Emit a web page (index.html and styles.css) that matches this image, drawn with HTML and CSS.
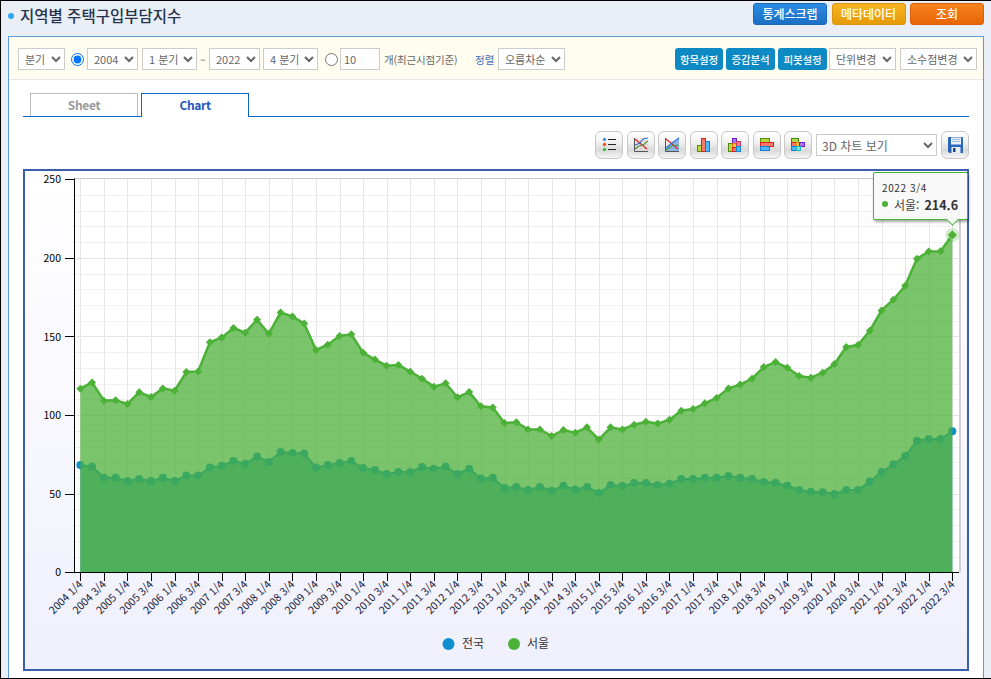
FILE: index.html
```html
<!DOCTYPE html>
<html lang="ko">
<head>
<meta charset="utf-8">
<title>지역별 주택구입부담지수</title>
<link rel="stylesheet" href="styles.css">
</head>
<body>
<header class="top">
  <h1 class="title"><span class="bullet"></span>지역별 주택구입부담지수</h1>
  <div class="top-actions">
    <button class="act act-blue">통계스크랩</button>
    <button class="act act-amber">메타데이터</button>
    <button class="act act-red">조회</button>
  </div>
</header>
<main class="panel">
  <div class="filters">
    <div class="group">
      <select class="sel w47"><option>분기</option></select>
      <input class="radio ml2" type="radio" name="range" checked>
      <select class="sel w51 mln1"><option>2004</option></select>
      <select class="sel w55"><option>1 분기</option></select>
      <span class="tilde">~</span>
      <select class="sel w51"><option>2022</option></select>
      <select class="sel w55 mln1"><option>4 분기</option></select>
      <input class="radio ml3" type="radio" name="range">
      <input class="num" type="text" value="10">
      <span class="hint">개(최근시점기준)</span>
      <span class="sort-label">정렬</span>
      <select class="sel w67"><option>오름차순</option></select>
    </div>
    <div class="group group-right">
      <button class="mini w48">항목설정</button>
      <button class="mini w49">증감분석</button>
      <button class="mini w49">피봇설정</button>
      <select class="sel w67 mln1"><option>단위변경</option></select>
      <select class="sel w77 ml1"><option>소수점변경</option></select>
    </div>
  </div>

  <div class="tabs">
    <div class="tab">Sheet</div>
    <div class="tab tab-on">Chart</div>
  </div>

  <div class="toolbar">
    <div class="tools">
      <button class="tool" title="목록"><svg class="ico" viewBox="0 0 28 28"><circle cx="9.5" cy="8.500" r="1.7" fill="#4a8fd8"/><circle cx="9.5" cy="13.500" r="1.7" fill="#f0521e"/><circle cx="9.5" cy="18.500" r="1.7" fill="#3fbf3f"/><path d="M13 8.500h8M13 13.500h8M13 18.500h8" stroke="#222" fill="none"/></svg></button>
      <button class="tool" title="선형"><svg class="ico" viewBox="0 0 28 28"><path d="M10 7v12M14 7v12M18 7v12M8 10h13M8 14h13" stroke="#d8a8a8" stroke-dasharray="1 1" fill="none"/><path d="M7.500 7v13.500H21" stroke="#555" fill="none"/><path d="M8 8l12 10" stroke="#e8201a" stroke-width="1.200" fill="none"/><path d="M8 14l5-2 3-4 5-1" stroke="#2a6fe0" stroke-width="1.200" fill="none"/><path d="M8 18l4-3 4-1 5-4" stroke="#4a9a3a" stroke-width="1.200" fill="none"/></svg></button>
      <button class="tool" title="영역"><svg class="ico" viewBox="0 0 28 28"><path d="M8 17l6-5 7-5v13H8z" fill="#8fb6e6"/><path d="M7.500 7v13.500H21" stroke="#555" fill="none"/><path d="M8 8l12 10" stroke="#e8201a" stroke-width="1.200" fill="none"/><path d="M8 17l6-5 7-5" stroke="#2a6fe0" stroke-width="1.200" fill="none"/><path d="M8 19l6-4 7-1" stroke="#4a9a3a" stroke-width="1.200" fill="none"/></svg></button>
      <button class="tool" title="막대"><svg class="ico" viewBox="0 0 28 28"><rect x="7.500" y="14.500" width="4" height="6" fill="#b8d840" stroke="#5f8a10"/><rect x="11.500" y="7.500" width="4" height="13" fill="#f47a68" stroke="#e0201a"/><rect x="15.500" y="10.500" width="4" height="10" fill="#50b8f5" stroke="#1a78d0"/></svg></button>
      <button class="tool" title="누적 막대"><svg class="ico" viewBox="0 0 28 28"><rect x="11.500" y="7.500" width="4" height="5" fill="#a878ec" stroke="#6a20c8"/><rect x="7.500" y="12.500" width="4" height="8" fill="#b8d840" stroke="#4f8a10"/><rect x="11.500" y="12.500" width="4" height="4" fill="#f7c830" stroke="#e07a10"/><rect x="11.500" y="16.500" width="4" height="4" fill="#f47a68" stroke="#e0201a"/><rect x="15.500" y="10.500" width="4" height="5" fill="#f47a88" stroke="#c83a6a"/><rect x="15.500" y="15.500" width="4" height="5" fill="#40c0f5" stroke="#1a80d8"/></svg></button>
      <button class="tool" title="가로 막대"><svg class="ico" viewBox="0 0 28 28"><rect x="7.500" y="7.500" width="9" height="4" fill="#b8d840" stroke="#5f8a10"/><rect x="7.500" y="11.500" width="13" height="4" fill="#f47a68" stroke="#e0201a"/><rect x="7.500" y="15.500" width="9" height="4" fill="#50b8f5" stroke="#1a78d0"/></svg></button>
      <button class="tool" title="가로 누적"><svg class="ico" viewBox="0 0 28 28"><rect x="7.500" y="7.500" width="7" height="4" fill="#b8d840" stroke="#3f8a10"/><rect x="7.500" y="11.500" width="5" height="4" fill="#f47a68" stroke="#e0201a"/><rect x="12.500" y="11.500" width="3" height="4" fill="#f7c830" stroke="#e0901a"/><rect x="15.500" y="11.500" width="5" height="4" fill="#a878ec" stroke="#6a20c8"/><rect x="7.500" y="15.500" width="5" height="4" fill="#50b8f5" stroke="#1a78d0"/><rect x="12.500" y="15.500" width="4" height="4" fill="#80e0d8" stroke="#20b8c0"/></svg></button>
    </div>
    <select class="sel sel-3d"><option>3D 차트 보기</option></select>
    <button class="tool" title="저장"><svg class="ico" viewBox="0 0 28 28"><path d="M7 7a1 1 0 0 1 1-1h13a1 1 0 0 1 1 1v15H8.500L7 20.500z" fill="#2a66b8"/><rect x="10" y="6.500" width="10" height="7" fill="#eaf2fb"/><path d="M11 8.500h8M11 10.500h8" stroke="#9dbde0" fill="none"/><rect x="10.500" y="16" width="9" height="6" fill="#e8eef6"/><rect x="12" y="17" width="2.500" height="4" fill="#1d3f80"/></svg></button>
  </div>

  <section class="chart">
    <svg id="plot" class="plot" viewBox="25 171 942 498" width="942" height="498"></svg>
    <div class="tip">
      <div class="tip-date">2022 3/4</div>
      <div class="tip-row"><span class="tip-dot"></span><span class="tip-name">서울:</span><b class="tip-val">214.6</b></div>
      <span class="tip-arrow"></span>
    </div>
  </section>
</main>
<script src="chart.js"></script>
</body>
</html>
```

FILE: styles.css
```css
* { box-sizing: border-box; }
html, body { margin: 0; padding: 0; }
body {
  width: 991px;
  height: 679px;
  overflow: hidden;
  display: flex;
  flex-direction: column;
  background: #eaeff7;
  border-top: 1px solid #000;
  border-left: 1px solid #000;
  border-bottom: 1px solid #000;
  font-family: "Noto Sans CJK KR", "Noto Sans", sans-serif;
  color: #555;
}
button, select, input { font-family: inherit; }

.top {
  height: 35px;
  flex: none;
  display: flex;
  justify-content: space-between;
  align-items: flex-start;
  padding: 2px 7px 0 7px;
}
.title {
  margin: 0;
  display: flex;
  align-items: center;
  font-size: 15.5px;
  font-weight: 500;
  line-height: 24px;
  color: #24344d;
}
.bullet {
  width: 6px;
  height: 6px;
  margin: 2px 6px 0 0;
  border-radius: 50%;
  background: #2ea8f5;
}
.top-actions { display: flex; gap: 4.5px; }
.act {
  width: 74px;
  height: 22px;
  padding: 0;
  border-radius: 3px;
  font-size: 12px;
  font-weight: 500;
  color: #fff;
  line-height: 20px;
}
.act-blue { border: 1px solid #1a68b8; background: linear-gradient(#2c8ce4, #1b6fc6); }
.act-amber { border: 1px solid #dd9410; background: linear-gradient(#f6b424, #e69b08); }
.act-red { border: 1px solid #de5f08; background: linear-gradient(#f6831f, #e96505); }

.panel {
  flex: 1;
  margin: 0 7px;
  min-height: 0;
  background: #fff;
  border: 1px solid #5b9bd5;
  border-bottom: 0;
}
.filters {
  height: 43px;
  display: flex;
  justify-content: space-between;
  padding: 11px 6px 0 9px;
  background: #fffdf0;
  border-bottom: 1px solid #e8e8e8;
}
.group { display: flex; align-items: center; gap: 4px; height: 22px; }
.group-right { gap: 3px; }
.sel {
  height: 22px;
  padding: 0 0 0 2px;
  background: #fff;
  border: 1px solid #ccc;
  border-radius: 0;
  font-size: 11px;
  color: #666;
}
.w47 { width: 47px; }
.w51 { width: 51px; }
.w55 { width: 55px; }
.w67 { width: 67px; }
.w77 { width: 77px; }
.ml1 { margin-left: 1px; }
.ml2 { margin-left: 2px; }
.ml3 { margin-left: 3px; }
.mln1 { margin-left: -1px; }
.radio { width: 13px; height: 13px; margin-top: 0; margin-bottom: 0; margin-right: 0; flex: none; }
.radio.ml2 { margin-left: 2px; }
.radio.ml3 { margin-left: 3px; }
.tilde { width: 4px; font-size: 10px; color: #777; display: flex; justify-content: center; }
.num {
  width: 40px;
  height: 22px;
  margin-left: -2px;
  padding: 0 3px;
  border: 1px solid #ccc;
  font-size: 11px;
  color: #666;
  background: #fff;
}
.hint { width: 74px; font-size: 10.5px; color: #666; white-space: nowrap; letter-spacing: -.15px; }
.sort-label { width: 19px; margin-left: 13px; font-size: 10.5px; color: #4270b8; white-space: nowrap; }
.mini {
  height: 22px;
  padding: 0;
  border: 0;
  border-radius: 3px;
  background: #0d8ac4;
  color: #fff;
  font-size: 10.5px;
  font-weight: 500;
  letter-spacing: -.2px;
}
.w48 { width: 48px; }
.w49 { width: 49px; }

.tabs {
  height: 24px;
  margin: 13px 14px 0;
  padding-left: 7px;
  display: flex;
  gap: 3px;
  border-bottom: 1px solid #0a66c2;
}
.tab {
  width: 108px;
  height: 23px;
  border: 1px solid #bbb;
  border-bottom: 0;
  background: #fff;
  text-align: center;
  font-size: 12px;
  font-weight: 700;
  line-height: 22px;
  letter-spacing: -.35px;
  color: #999;
}
.tab-on {
  height: 24px;
  border-color: #0a66c2;
  color: #2557c0;
}

.toolbar {
  height: 28px;
  margin: 14px 14px 0;
  display: flex;
  justify-content: flex-end;
  align-items: center;
}
.tools { display: flex; gap: 3.5px; }
.tool {
  width: 28px;
  height: 28px;
  padding: 0;
  border: 1px solid #c8c8c8;
  border-radius: 6px;
  background: linear-gradient(#fff 0%, #f4f4f4 35%, #d9d9d9 70%, #f6f6f6 100%);
}
.ico { display: block; width: 28px; height: 28px; margin: -1px; }
.sel-3d { width: 121px; margin: 0 4px; padding-left: 1px; font-size: 12px; }

.chart {
  position: relative;
  height: 502px;
  margin: 10px 14px 0;
  border: 2px solid #3a60ab;
  background: linear-gradient(#fff, #f0f0fc);
}
.plot { display: block; }
.axis-y { font-size: 10.5px; fill: #000; text-anchor: end; }
.axis-x { font-size: 10.5px; fill: #1a1a3a; text-anchor: end; }
.legend-text { font-size: 12px; fill: #333; }

.tip {
  position: absolute;
  left: 848px;
  top: 1px;
  width: 95px;
  height: 48px;
  padding: 8px 0 0 8px;
  background: #f9f9f9;
  border: 1px solid #4bb137;
  border-radius: 2px;
  box-shadow: 1px 2px 3px rgba(0, 0, 0, .35);
  color: #333;
}
.tip-date { font-size: 10px; line-height: 14px; letter-spacing: .6px; white-space: nowrap; }
.tip-row { display: flex; align-items: center; height: 18px; font-size: 12px; white-space: nowrap; }
.tip-dot { width: 6px; height: 6px; margin-right: 6px; border-radius: 50%; background: #4bb137; flex: none; }
.tip-name { flex: none; margin-right: 5px; color: #444; }
.tip-val { flex: none; font-size: 12.5px; font-weight: 700; }
.tip-arrow {
  position: absolute;
  right: 10px;
  bottom: -5px;
  width: 9px;
  height: 9px;
  background: #f9f9f9;
  border-right: 1px solid #4bb137;
  border-bottom: 1px solid #4bb137;
  transform: rotate(45deg);
}
```

FILE: chart.js
```js
(function () {
  var seoul = [116.8,120.8,109.2,109.4,107.1,114.5,111.5,117.0,115.5,127.4,127.8,146.3,149.3,155.4,152.4,160.7,151.8,165.2,162.8,158.2,141.4,144.8,150.3,151.4,139.7,
    135.3,131.4,131.9,127.6,123.2,118.1,120.2,111.3,114.7,105.6,104.9,95.0,95.4,90.9,90.9,86.7,90.5,88.8,92.2,84.4,92.2,90.9,93.9,95.8,94.6,
    97.1,102.8,103.9,107.5,110.9,117.0,119.4,123.2,130.6,133.8,130.2,124.9,123.8,127.0,132.5,143.3,144.6,153.7,166.6,173.4,182.3,199.5,204.0,204.2,214.6];
  var nation = [68.3,67.2,60.2,60.2,58.1,59.4,58.1,60.2,58.1,61.5,61.5,66.6,67.8,70.8,69.1,73.6,70.2,76.5,75.9,75.5,66.6,68.3,69.5,70.8,66.3,
    65.1,62.5,63.8,63.8,67.0,65.9,67.2,62.5,65.9,59.6,60.2,53.6,54.3,52.4,54.3,51.9,55.1,52.6,54.3,50.4,55.5,54.9,56.8,56.8,55.5,
    56.4,59.4,59.4,60.2,60.2,61.3,60.2,59.4,57.4,57.0,55.1,52.4,51.3,50.9,49.8,52.4,52.4,57.7,63.8,68.7,74.0,83.7,84.8,84.8,89.7];

  var NS = "http://www.w3.org/2000/svg";
  var svg = document.getElementById("plot");
  var X0 = 80.3, STEP = 872 / 74, Y0 = 572.3, UNIT = 1.572;
  var LEFT = 74, RIGHT = 959, TOP = 178.5;
  function px(i) { return X0 + STEP * i; }
  function py(v) { return Y0 - v * UNIT; }

  function el(tag, attrs, text, parent) {
    var node = document.createElementNS(NS, tag);
    for (var k in attrs) node.setAttribute(k, attrs[k]);
    if (text) node.textContent = text;
    (parent || svg).appendChild(node);
    return node;
  }
  function crisp(n) { return Math.round(n) + 0.5; }
  function hline(y, x1, x2, color) { el("line", { x1: x1, x2: x2, y1: crisp(y), y2: crisp(y), stroke: color }); }
  function vline(x, y1, y2, color) { el("line", { x1: crisp(x), x2: crisp(x), y1: y1, y2: y2, stroke: color }); }
  function line(data) { return data.map(function (v, i) { return px(i).toFixed(1) + "," + py(v).toFixed(1); }).join(" "); }
  function area(data) { return px(0).toFixed(1) + "," + Y0 + " " + line(data) + " " + px(data.length - 1).toFixed(1) + "," + Y0; }

  // plot background
  el("rect", { x: LEFT, y: TOP, width: RIGHT - LEFT, height: Y0 - TOP, fill: "#fff" });
  el("rect", { x: RIGHT, y: TOP, width: 2, height: Y0 - TOP, fill: "#cfcfd4" });

  // grid
  var v, i;
  for (v = 10; v < 250; v += 10) {
    if (v % 50) hline(py(v), LEFT, RIGHT, "#f0f0f0");
  }
  for (v = 50; v < 250; v += 50) hline(py(v), LEFT, RIGHT, "#e4e4e4");
  for (i = 0; i < 38; i++) vline(px(i * 2), TOP, Y0, "#e6e6e6");
  hline(TOP - 0.5, LEFT, RIGHT, "#c8c8c8");

  // series: national underneath, Seoul translucent on top
  el("polygon", { points: area(nation), fill: "#2b9ab0", "fill-opacity": 0.8 });
  el("polyline", { points: line(nation), fill: "none", stroke: "#0f8fd0", "stroke-width": 2 });
  nation.forEach(function (n, k) { el("circle", { cx: px(k), cy: py(n), r: 4, fill: "#0f8fd0" }); });

  el("polygon", { points: area(seoul), fill: "#4bb137", "fill-opacity": 0.74 });
  el("polyline", { points: line(seoul), fill: "none", stroke: "#4bb137", "stroke-width": 2.5 });
  seoul.forEach(function (n, k) {
    var x = px(k), y = py(n), r = 4;
    el("polygon", { points: [x, y - r, x + r, y, x, y + r, x - r, y].join(","), fill: "#4bb137" });
  });

  // hovered point
  var hx = px(74), hy = py(214.6);
  el("circle", { cx: hx, cy: hy, r: 7, fill: "#4bb137", "fill-opacity": 0.25 });
  el("polygon", { points: [hx, hy - 5, hx + 5, hy, hx, hy + 5, hx - 5, hy].join(","), fill: "#4bb137", stroke: "#fff", "stroke-width": 0.5 });

  // axes
  vline(LEFT, TOP, Y0 + 1, "#000");
  hline(Y0, 65, RIGHT, "#000");
  for (v = 0; v <= 250; v += 50) {
    hline(py(v), 65, LEFT, "#000");
    el("text", { x: 61, y: py(v) + 4, "class": "axis-y" }, String(v));
  }
  for (i = 0; i < 38; i++) {
    var tx = px(i * 2);
    vline(tx, Y0, 581, "#000");
    var year = 2004 + Math.floor(i / 2);
    var label = year + " " + (i % 2 ? "3/4" : "1/4");
    var lx = tx + 3, ly = 585;
    el("text", { x: lx, y: ly, "class": "axis-x", transform: "rotate(-45 " + lx + " " + ly + ")" }, label);
  }

  // legend
  el("circle", { cx: 448.5, cy: 644, r: 6, fill: "#0f8fd0" });
  el("text", { x: 462, y: 648, "class": "legend-text" }, "전국");
  el("circle", { cx: 514, cy: 644, r: 6, fill: "#4bb137" });
  el("text", { x: 527, y: 648, "class": "legend-text" }, "서울");
})();
```
